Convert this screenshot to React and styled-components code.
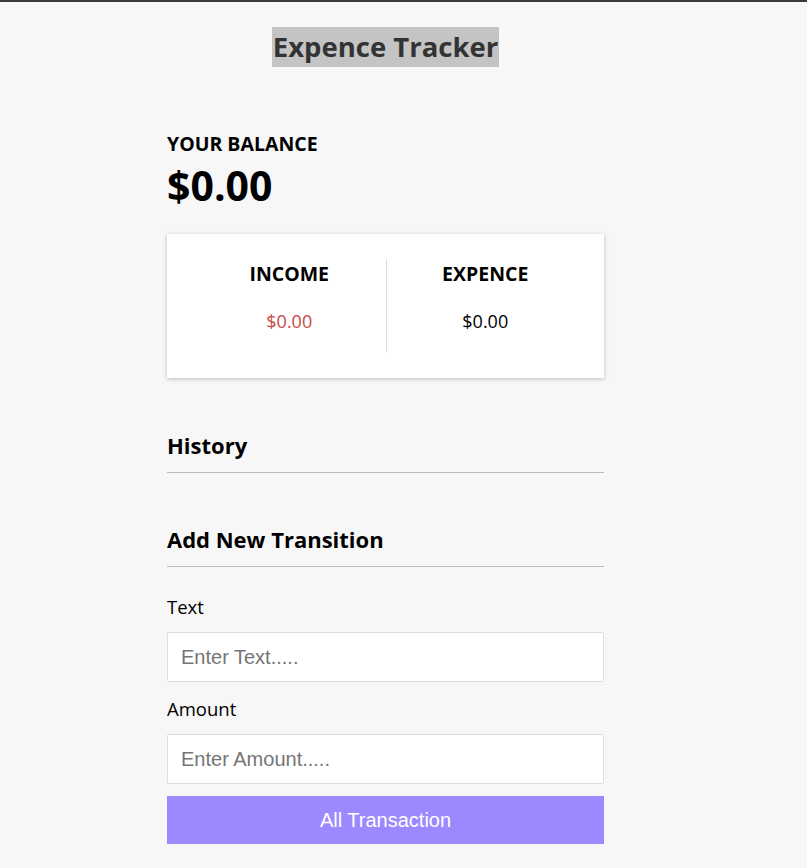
import styled, { createGlobalStyle } from "styled-components";

const GlobalStyle = createGlobalStyle`
  * {
    box-sizing: border-box;
  }
  body {
    margin: 0;
    background: #f7f7f7;
    border-top: 2px solid #3a3a3a;
    font-family: "Open Sans", "Noto Sans", sans-serif;
    color: #000;
  }
`;

const Page = styled.div`
  width: 437px;
  margin-left: 167px;
  padding-top: 25px;
  display: flex;
  flex-direction: column;
`;

const Title = styled.h2`
  align-self: center;
  margin: 0;
  padding: 0 1px;
  height: 40px;
  line-height: 40px;
  background: #c4c4c4;
  color: #333;
  font-size: 27.5px;
  font-weight: 700;
`;

const BalanceLabel = styled.h4`
  margin: 64px 0 0;
  font-size: 19.5px;
  font-weight: 700;
  line-height: 26px;
`;

const Balance = styled.h1`
  margin: 4px 0 0;
  font-size: 41px;
  font-weight: 700;
  line-height: 48px;
`;

const Card = styled.div`
  margin-top: 25px;
  background: #fff;
  box-shadow: 0 1px 4px rgba(0, 0, 0, 0.25);
  padding: 25px 20px;
  display: grid;
  grid-template-columns: 1fr 1fr;
`;

const Column = styled.div`
  display: flex;
  flex-direction: column;
  align-items: center;
  padding: 2px 0 0 ${(props) => (props.divided ? "0" : "6px")};
  height: 94px;
  border-left: ${(props) => (props.divided ? "1px solid #ddd" : "none")};
`;

const ColumnTitle = styled.h4`
  margin: 0;
  font-size: 19.5px;
  font-weight: 700;
  line-height: 26px;
`;

const Money = styled.p`
  margin: 22px 0 0;
  font-size: 18px;
  line-height: 24px;
  color: ${(props) => props.color};
`;

const SectionTitle = styled.h3`
  margin: ${(props) => props.top} 0 0;
  padding-bottom: 13px;
  border-bottom: 1px solid #bbb;
  font-size: 22px;
  font-weight: 700;
  line-height: 28px;
`;

const Label = styled.label`
  display: block;
  margin: ${(props) => props.top} 0 13px;
  font-size: 18.5px;
  line-height: 24px;
`;

const Input = styled.input`
  width: 100%;
  height: 50px;
  border: 1px solid #dedede;
  border-radius: 2px;
  background: #fff;
  padding: 0 13px;
  font-family: "Liberation Sans", Arial, sans-serif;
  font-size: 20px;
  outline: none;

  &::placeholder {
    color: #757575;
  }
`;

const Button = styled.button`
  margin-top: 12px;
  height: 48px;
  width: 100%;
  border: none;
  background: #9c88ff;
  color: #fff;
  font-family: "Liberation Sans", Arial, sans-serif;
  font-size: 20px;
  cursor: pointer;
`;

export default function App() {
  return (
    <>
      <GlobalStyle />
      <Page>
        <Title>Expence Tracker</Title>
        <BalanceLabel>YOUR BALANCE</BalanceLabel>
        <Balance>$0.00</Balance>
        <Card>
          <Column>
            <ColumnTitle>INCOME</ColumnTitle>
            <Money color="#c84848">$0.00</Money>
          </Column>
          <Column divided>
            <ColumnTitle>EXPENCE</ColumnTitle>
            <Money color="#000">$0.00</Money>
          </Column>
        </Card>
        <SectionTitle top="53px">History</SectionTitle>
        <SectionTitle top="52px">Add New Transition</SectionTitle>
        <Label top="28px">Text</Label>
        <Input placeholder="Enter Text....." />
        <Label top="15px">Amount</Label>
        <Input placeholder="Enter Amount....." />
        <Button>All Transaction</Button>
      </Page>
    </>
  );
}
